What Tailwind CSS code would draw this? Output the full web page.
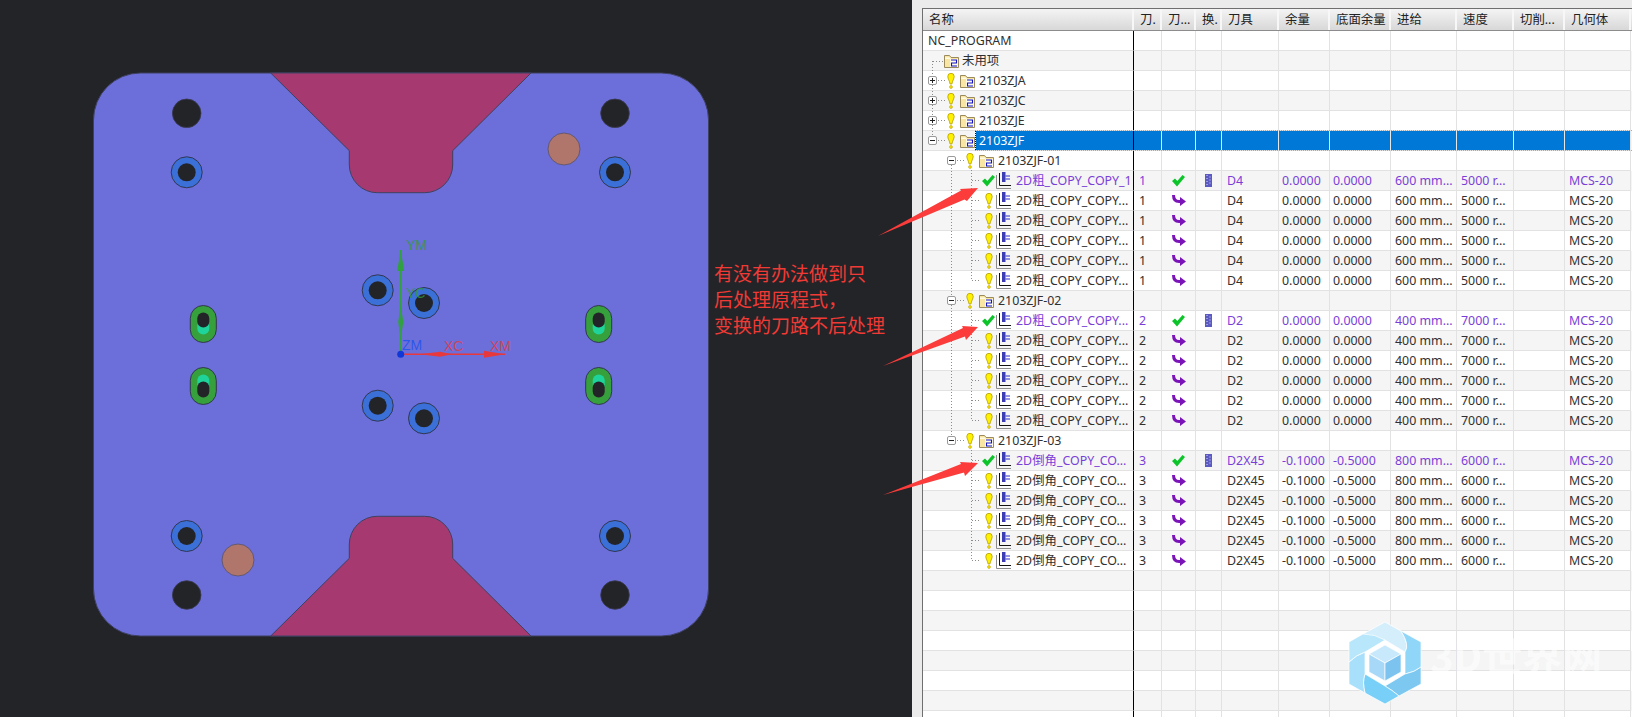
<!DOCTYPE html>
<html lang="zh-CN">
  <head>
    <meta charset="UTF-8" />
    <title>NC_PROGRAM</title>
    <script src="https://cdn.jsdelivr.net/npm/@tailwindcss/browser@4"></script>
  </head>
  <body class="bg-[#232428]">
    <div class="relative flex h-[717px] w-[1632px] overflow-hidden [font-family:'Noto_Sans','Noto_Sans_CJK_SC',sans-serif]">
      <!-- CAD viewport -->
      <div class="relative h-full w-[912px] shrink-0 bg-[#232428]">
        <svg class="block" width="912" height="717" viewBox="0 0 912 717" id="viewport"></svg>
        <div class="absolute left-[714px] top-[261px] text-[19px] leading-[26px] text-[#f03a35]">
          <p>有没有办法做到只</p>
          <p>后处理原程式，</p>
          <p>变换的刀路不后处理</p>
        </div>
      </div>

      <!-- operation navigator -->
      <div class="h-full flex-1 bg-[#ebebeb] pl-[10px] pt-[8px]">
        <div class="h-full border-l border-t border-[#6f6f6f] bg-white text-[12.4px] text-[#303030]">
          <div id="head" class="grid h-[22px] grid-cols-[211px_28px_34px_26px_57px_51px_61px_66px_57px_51px_66px] border-b border-[#8c8c8c] bg-gradient-to-b from-[#f4f4f4] to-[#d8d8d8]"></div>
          <div id="rows"></div>
        </div>
      </div>

      <!-- tree connectors, arrows, watermark -->
      <svg class="pointer-events-none absolute left-0 top-0" width="1632" height="717" viewBox="0 0 1632 717" id="over"></svg>
    </div>

    <script>
      var bulb = '<svg class="shrink-0" width="8" height="16" viewBox="0 0 8 16"><path d="M.8 3.500a3.200 3.200 0 0 1 6.400 0c0 2-1.800 4.500-2.300 7.500H3.100C2.600 8 .8 5.500.8 3.500z" fill="#fff200" stroke="#b39b00" stroke-width=".8"/><circle cx="4" cy="14" r="1.400" fill="#ffe600" stroke="#b39b00" stroke-width=".6"/></svg>';
      var folder = '<svg class="shrink-0" width="15" height="14" viewBox="0 0 15 14"><path d="M.5 13.500V1.500h5l1.500 2h7.500v10z" fill="#f9e6a2" stroke="#9a8a5c"/><path d="M1 3.500h5.500V5H1z" fill="#fffbe8"/><rect x="6" y="5" width="8" height="8" fill="#fffbe6"/><path d="M7 6h5.500v3H7.500v3h5.500" fill="none" stroke="#1414c8" stroke-width="1.100"/></svg>';
      var check = '<svg class="shrink-0" width="13" height="12" viewBox="0 0 13 12"><path d="M0 6l3-2.500 2.300 2.500L10.500 0 13 2 5 11.500z" fill="#0cc42a"/></svg>';
      var op = '<svg class="shrink-0" width="15" height="17" viewBox="0 0 15 17"><path d="M.5 3v13.500H15" fill="none" stroke="#8c8c8c"/><path d="M3.500 1v12.500H15" fill="none" stroke="#111"/><rect x="6" y="0" width="3.500" height="10" fill="#3c3cb4"/><path d="M9.500 4H14M9.500 7H14" stroke="#2a2ad0"/></svg>';
      var hook = '<svg width="14" height="12" viewBox="0 0 14 12"><path d="M1.500 0c0 4 2 6.500 5.500 6.500h2" fill="none" stroke="#7a14b8" stroke-width="3"/><path d="M8 2l6 4.500L8 11z" fill="#7a14b8"/></svg>';
      var tool = '<svg width="7" height="13" viewBox="0 0 7 13"><rect width="7" height="13" fill="#5a5ac0"/><path d="M1 1.500h2M4 3h2M1 4.500h2M4 6h2M1 7.500h2M4 9h2M1 10.500h2" stroke="#9c9ce4"/></svg>';

      function box(minus) {
        return '<span class="relative flex h-[9px] w-[9px] shrink-0 items-center justify-center rounded-[2px] border border-[#9a9a9a] bg-white">' +
          '<span class="absolute h-px w-[5px] bg-[#222]"></span>' +
          (minus ? "" : '<span class="absolute h-[5px] w-px bg-[#222]"></span>') + "</span>";
      }

      var heads = ["名称", "刀.", "刀...", "换.", "刀具", "余量", "底面余量", "进给", "速度", "切削...", "几何体"];
      var headHtml = "";
      heads.forEach(function (h) {
        headHtml += '<div class="flex items-center overflow-hidden whitespace-nowrap border-r-2 border-[#f7f7f7] pl-[6px] pt-[2px] text-[#222]">' + h + "</div>";
      });
      document.getElementById("head").innerHTML = headHtml;

      var gridClass = "grid h-[20px] grid-cols-[211px_28px_34px_26px_57px_51px_61px_66px_57px_51px_66px] leading-[19px] ";

      function cell(content, extra) {
        return '<div class="flex items-center overflow-hidden whitespace-nowrap border-b border-r border-[#e2e2e2] ' + (extra || "") + '">' + content + "</div>";
      }

      function emptyCells(n, extra) {
        var s = "";
        for (var i = 0; i < n; i++) s += cell("", extra);
        return s;
      }

      function row(name, rest, rowClass) {
        return '<div class="' + gridClass + (rowClass || "") + '">' + name + (rest || "") + "</div>";
      }

      function nameCell(inner, pad) {
        return '<div class="flex items-center overflow-hidden whitespace-nowrap border-b border-r border-b-[#e2e2e2] border-r-black ' + pad + '">' + inner + "</div>";
      }

      var html = "";
      html += row(nameCell("<span>NC_PROGRAM</span>", "pl-[5px]"), emptyCells(10));
      html += row(nameCell(folder + '<span class="ml-[3px]">未用项</span>', "pl-[21px]"), emptyCells(10), "bg-[#f5f5f5]");

      [["2103ZJA", ""], ["2103ZJC", "bg-[#f5f5f5]"], ["2103ZJE", ""]].forEach(function (g) {
        html += row(nameCell(box(false) + '<span class="ml-[10px]">' + bulb + '</span><span class="ml-[5px]">' + folder + '</span><span class="ml-[4px]">' + g[0] + "</span>", "pl-[5px]"), emptyCells(10), g[1]);
      });

      // selected row
      html += row(
        nameCell(box(true) + '<span class="ml-[10px]">' + bulb + '</span><span class="ml-[5px]">' + folder + '</span><span class="ml-[1px] flex h-full flex-1 items-center bg-[#0078d7] pl-[3px] text-white">2103ZJF</span>', "pl-[5px]"),
        emptyCells(10, "bg-[#0078d7] border-r-[#e6e6e6]"),
        "bg-[#f5f5f5]"
      );

      var groups = [
        { title: "2103ZJF-01", first: "2D粗_COPY_COPY_1", name: "2D粗_COPY_COPY...", n: "1", d: "D4", a: "0.0000", b: "0.0000", f: "600 mm...", s: "5000 r..." },
        { title: "2103ZJF-02", first: "2D粗_COPY_COPY...", name: "2D粗_COPY_COPY...", n: "2", d: "D2", a: "0.0000", b: "0.0000", f: "400 mm...", s: "7000 r..." },
        { title: "2103ZJF-03", first: "2D倒角_COPY_CO...", name: "2D倒角_COPY_CO...", n: "3", d: "D2X45", a: "-0.1000", b: "-0.5000", f: "800 mm...", s: "6000 r..." },
      ];

      var count = 6;
      function stripe() {
        var c = count % 2 ? "bg-[#f5f5f5]" : "";
        count++;
        return c;
      }

      groups.forEach(function (g) {
        html += row(nameCell(box(true) + '<span class="ml-[10px]">' + bulb + '</span><span class="ml-[5px]">' + folder + '</span><span class="ml-[4px]">' + g.title + "</span>", "pl-[24px]"), emptyCells(10), stripe());
        for (var i = 0; i < 6; i++) {
          var main = i === 0;
          var icon = main ? check : '<span class="flex w-[13px] justify-center">' + bulb + "</span>";
          var rest =
            cell(g.n, "pl-[5px]") +
            cell('<span class="flex w-full justify-center">' + (main ? check : hook) + "</span>") +
            cell(main ? '<span class="flex w-full justify-center">' + tool + "</span>" : "") +
            cell(g.d, "pl-[5px]") +
            cell(g.a, "pl-[3px]") +
            cell(g.b, "pl-[3px]") +
            cell(g.f, "pl-[4px]") +
            cell(g.s, "pl-[4px]") +
            cell("") +
            cell("MCS-20", "pl-[4px]");
          html += row(
            nameCell(icon + '<span class="ml-px">' + op + '</span><span class="ml-[5px]">' + (main ? g.first : g.name) + "</span>", "pl-[59px]"),
            rest,
            stripe() + (main ? " text-[#7a3ed8]" : "")
          );
        }
      });

      while (count < 35) {
        html += row(nameCell("", ""), emptyCells(10), stripe());
      }
      document.getElementById("rows").innerHTML = html;

      // part geometry, coordinates as read off the reference
      var hole = function (x, y) {
        return '<circle cx="' + x + '" cy="' + y + '" r="14.300" fill="#232428" stroke="#3a3a50" stroke-width=".8"/>';
      };
      var ring = function (x, y) {
        return '<circle cx="' + x + '" cy="' + y + '" r="15.500" fill="#3a70d8" stroke="#33364f"/><circle cx="' + x + '" cy="' + y + '" r="9" fill="#232428"/>';
      };
      var brown = function (x, y) {
        return '<circle cx="' + x + '" cy="' + y + '" r="16" fill="#b0766c" stroke="#55506a" stroke-width=".8"/>';
      };
      var slot = function (x, y, up) {
        var inner = up
          ? '<rect x="' + (x - 6) + '" y="' + (y + 7) + '" width="12" height="16" rx="6" fill="#1fd49a"/><rect x="' + (x - 6) + '" y="' + (y + 14) + '" width="12" height="16" rx="6" fill="#232428"/>'
          : '<rect x="' + (x - 6) + '" y="' + (y + 14) + '" width="12" height="15" rx="6" fill="#1fd49a"/><rect x="' + (x - 6) + '" y="' + (y + 7) + '" width="12" height="15" rx="6" fill="#232428"/>';
        return '<rect x="' + (x - 13) + '" y="' + y + '" width="26" height="37" rx="13" fill="#35a03c" stroke="#33364f"/>' + inner;
      };
      var pocket = "M270.700 73L349.300 150.700V165A28 28 0 0 0 377.300 192.700H424.700A28 28 0 0 0 452.700 165V150.700L531 73Z";

      var v = "";
      v += '<rect x="93.500" y="73" width="615" height="563" rx="47" fill="#6c6fd9" stroke="#3e4060"/>';
      v += '<path d="' + pocket + '" fill="#a63a70" stroke="#3e4060"/>';
      v += '<path d="' + pocket + '" fill="#a63a70" stroke="#3e4060" transform="matrix(1 0 0 -1 0 709)"/>';
      v += hole(186.700, 113.300) + hole(615, 113.300) + hole(186.700, 595) + hole(615, 595);
      v += ring(186.700, 172.300) + ring(615, 172.300) + ring(186.700, 536) + ring(615, 536);
      v += ring(377.700, 290.300) + ring(424, 303) + ring(377.700, 405.700) + ring(424, 418.300);
      v += brown(564, 149) + brown(238, 560);
      v += slot(203.300, 305.500, false) + slot(598.700, 305.500, false) + slot(203.300, 367.500, true) + slot(598.700, 367.500, true);
      // WCS triad
      v += '<path d="M400.700 354V250" stroke="#30a040" stroke-width="1.600"/>';
      v += '<path d="M400.700 250l3.500 21h-7zM400.700 304l2.500 18-2.500 18-2.500-18z" fill="#30a040"/>';
      v += '<path d="M401 354.300H505" stroke="#e8383c" stroke-width="1.400"/>';
      v += '<path d="M505 354.300l-21 3.500v-7zM452 354.300l-12 2.500-20-2.500 20-2.500z" fill="#e8383c"/>';
      v += '<circle cx="400.700" cy="354.300" r="3.500" fill="#1038d8"/>';
      var label = 'font-family="Liberation Sans" font-size="14" fill-opacity=".8"';
      v += "<text " + label + ' x="406" y="250" fill="#2f9a3c">YM</text>';
      v += "<text " + label + ' x="406" y="298" fill="#2f9a3c">YC</text>';
      v += "<text " + label + ' x="402" y="350" fill="#1a50f0">ZM</text>';
      v += "<text " + label + ' x="444" y="351" fill="#e8383c">XC</text>';
      v += "<text " + label + ' x="490" y="351" fill="#e8383c">XM</text>';
      document.getElementById("viewport").innerHTML = v;

      // overlay
      var o = "";
      var dots = 'fill="none" stroke="#8c8c8c" stroke-dasharray="1 2"';
      o += '<path d="M932.500 61V75M932.500 85V95M932.500 105V115M932.500 125V135M933 61.500H944M938 80.500H945M938 100.500H945M938 120.500H945M938 140.500H945" ' + dots + "/>";
      o += '<path d="M951.500 165V295M951.500 305V435M957 160.500H964M957 300.500H964M957 440.500H964" ' + dots + "/>";
      [[170, 180, 280], [310, 320, 420], [450, 460, 560]].forEach(function (g) {
        o += '<path d="M971.500 ' + g[0] + "V" + g[2] + '" ' + dots + "/>";
        for (var y = g[1]; y <= g[2]; y += 20) {
          o += '<path d="M972 ' + (y + 0.5) + 'H981" ' + dots + "/>";
        }
      });
      o += '<path d="M975 130.500H1632M975 150.500H1632" fill="none" stroke="#f0a020" stroke-dasharray="1 1"/>';
      o += '<path d="M975.500 131V150" fill="none" stroke="#111" stroke-dasharray="1 1"/>';
      var red = 'fill="#fb3c3a"';
      o += '<polygon points="878,236 961,190.500 960,189 978,188 967,201 964.500,199.500" ' + red + "/>";
      o += '<polygon points="883,366 963,328 962,326 978,327 966,340 965,336.500" ' + red + "/>";
      o += '<polygon points="883,495 961,464 960,462 978,463 965,476 964,472.500" ' + red + "/>";
      // watermark
      o += '<path d="M1385 622L1421 642V684L1385 704L1349 684V642Z" fill="#fff"/>';
      o += '<g stroke="#fff" stroke-width=".7">';
      o += '<path d="M1363 634L1385 622L1401 631Q1410 645 1405 652L1385 640Z" fill="#d5eefc"/>';
      o += '<path d="M1401 631L1421 642V667Q1415 672 1405 674V652Q1410 645 1401 631Z" fill="#90d6f8"/>';
      o += '<path d="M1421 667V684L1399 696Q1392 690 1385 686L1405 674Q1415 672 1421 667Z" fill="#7cc8f0"/>';
      o += '<path d="M1399 696L1385 704L1365 693Q1362 682 1365 674L1385 686Q1392 690 1399 696Z" fill="#78d0f8"/>';
      o += '<path d="M1365 693L1349 684V662Q1356 655 1365 652V674Q1362 682 1365 693Z" fill="#a8dffb"/>';
      o += '<path d="M1349 662V642L1363 634Q1375 634 1385 640L1365 652Q1356 655 1349 662Z" fill="#b8e6fb"/>';
      o += '<path d="M1385 645L1401 654L1385 663L1369 654Z" fill="#c8e9fb"/>';
      o += '<path d="M1369 654L1385 663V681L1369 672Z" fill="#a8d8f7"/>';
      o += '<path d="M1401 654L1385 663V681L1401 672Z" fill="#7cc4ef"/>';
      o += "</g>";
      o += '<text x="1430" y="672" font-family="Noto Sans CJK SC" font-weight="700" font-size="40" fill="#fff" fill-opacity=".6">3D世界网</text>';
      document.getElementById("over").innerHTML = o;
    </script>
  </body>
</html>
